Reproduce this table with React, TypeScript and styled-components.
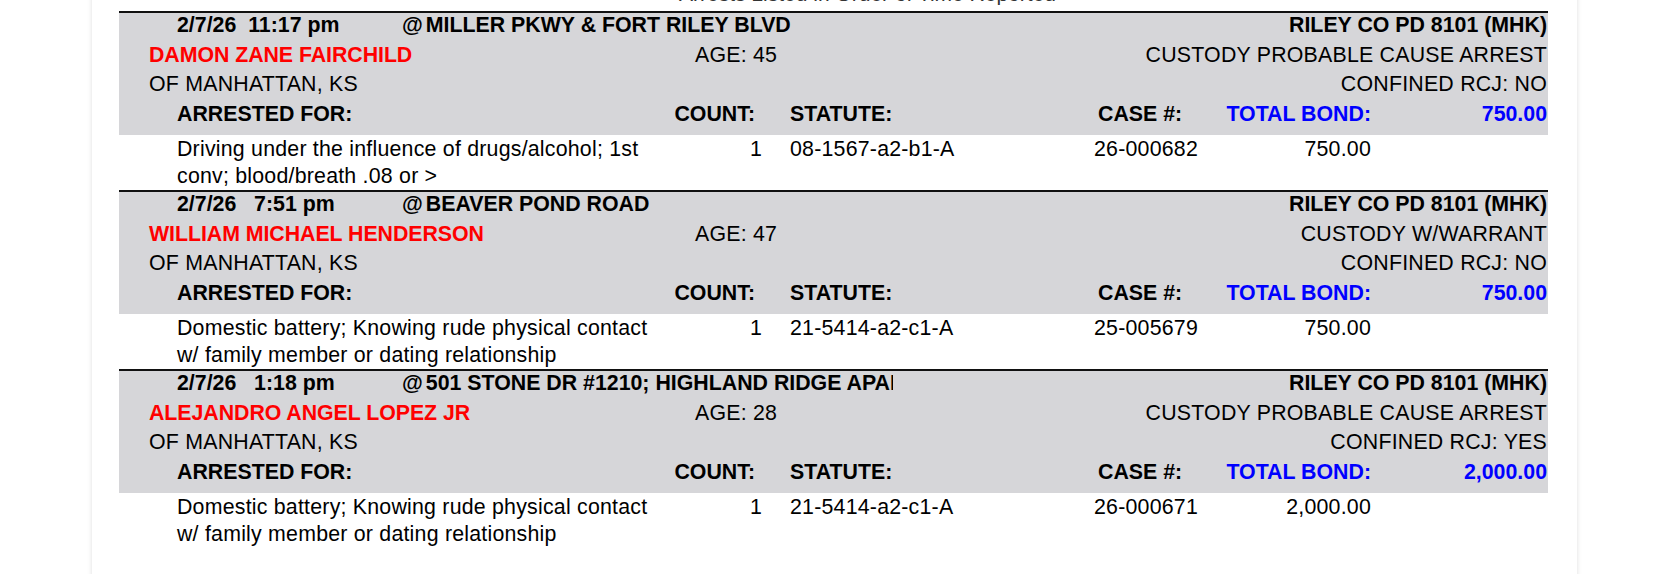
import React from 'react';
import styled, { createGlobalStyle } from 'styled-components';

interface Charge {
  offense: string;
  count: number;
  statute: string;
  caseNo: string;
  bond: string;
}

interface Arrest {
  date: string;
  time: string;
  location: string;
  agency: string;
  name: string;
  age: number;
  custody: string;
  city: string;
  confined: string;
  total: string;
  charges: Charge[];
}

const ARRESTS: Arrest[] = [
  {
    date: '2/7/26',
    time: '11:17 pm',
    location: 'MILLER PKWY & FORT RILEY BLVD',
    agency: 'RILEY CO PD 8101 (MHK)',
    name: 'DAMON ZANE FAIRCHILD',
    age: 45,
    custody: 'CUSTODY PROBABLE CAUSE ARREST',
    city: 'OF MANHATTAN, KS',
    confined: 'NO',
    total: '750.00',
    charges: [
      {
        offense: 'Driving under the influence of drugs/alcohol; 1st conv; blood/breath .08 or >',
        count: 1,
        statute: '08-1567-a2-b1-A',
        caseNo: '26-000682',
        bond: '750.00',
      },
    ],
  },
  {
    date: '2/7/26',
    time: '7:51 pm',
    location: 'BEAVER POND ROAD',
    agency: 'RILEY CO PD 8101 (MHK)',
    name: 'WILLIAM MICHAEL HENDERSON',
    age: 47,
    custody: 'CUSTODY W/WARRANT',
    city: 'OF MANHATTAN, KS',
    confined: 'NO',
    total: '750.00',
    charges: [
      {
        offense: 'Domestic battery; Knowing rude physical contact w/ family member or dating relationship',
        count: 1,
        statute: '21-5414-a2-c1-A',
        caseNo: '25-005679',
        bond: '750.00',
      },
    ],
  },
  {
    date: '2/7/26',
    time: '1:18 pm',
    location: '501 STONE DR #1210; HIGHLAND RIDGE APARTMENTS',
    agency: 'RILEY CO PD 8101 (MHK)',
    name: 'ALEJANDRO ANGEL LOPEZ JR',
    age: 28,
    custody: 'CUSTODY PROBABLE CAUSE ARREST',
    city: 'OF MANHATTAN, KS',
    confined: 'YES',
    total: '2,000.00',
    charges: [
      {
        offense: 'Domestic battery; Knowing rude physical contact w/ family member or dating relationship',
        count: 1,
        statute: '21-5414-a2-c1-A',
        caseNo: '26-000671',
        bond: '2,000.00',
      },
    ],
  },
];

const CHARGE_COLUMNS = '543px 100px 332px 126px 151px 1fr';

export default function App() {
  return (
    <>
      <GlobalStyle />
      <Sheet>
        <Title>Arrests Listed in Order of Time Reported</Title>
        <Report>
          {ARRESTS.map(item => (
            <Record key={item.name}>
              <Summary>
                <HeadRow $cols="283px 491px 1fr">
                  <When>{`${item.date}  ${item.time.padStart(8)}`}</When>
                  <Location>
                    <At>@</At>
                    {item.location}
                  </Location>
                  <Agency>{item.agency}</Agency>
                </HeadRow>
                <HeadRow $cols="576px 1fr auto">
                  <Name>{item.name}</Name>
                  <Plain>AGE: {item.age}</Plain>
                  <Plain $right>{item.custody}</Plain>
                </HeadRow>
                <HeadRow $cols="576px 1fr auto">
                  <City>{item.city}</City>
                  <span />
                  <Plain $right>CONFINED RCJ: {item.confined}</Plain>
                </HeadRow>
                <HeadRow $cols={CHARGE_COLUMNS}>
                  <Label $padLeft={58}>ARRESTED FOR:</Label>
                  <Label $right $padRight={7}>COUNT:</Label>
                  <Label $padLeft={28}>STATUTE:</Label>
                  <Label $padLeft={4}>CASE #:</Label>
                  <Label $right $blue>TOTAL BOND:</Label>
                  <Label $right $blue $padRight={1}>{item.total}</Label>
                </HeadRow>
              </Summary>
              {item.charges.map(charge => (
                <ChargeRow key={charge.caseNo}>
                  <Offense>{charge.offense}</Offense>
                  <ChargeCell $right>{charge.count}</ChargeCell>
                  <ChargeCell $padLeft={28}>{charge.statute}</ChargeCell>
                  <ChargeCell>{charge.caseNo}</ChargeCell>
                  <ChargeCell $right>{charge.bond}</ChargeCell>
                  <span />
                </ChargeRow>
              ))}
            </Record>
          ))}
        </Report>
      </Sheet>
    </>
  );
}

const GlobalStyle = createGlobalStyle`
  html, body {
    margin: 0;
    padding: 0;
    background: #ffffff;
    overflow: hidden;
  }

  body {
    font-family: 'Liberation Sans', Arial, sans-serif;
    color: #000000;
  }
`;

const Sheet = styled.div`
  width: 1485px;
  min-height: 640px;
  margin-left: 92px;
  margin-top: -19px;

  background: #ffffff;
  box-shadow: 0 0 5px rgba(0, 0, 0, 0.13);
`;

const Title = styled.h2`
  margin: 0 0 4px;
  padding-left: 66px;
  height: 26px;

  font-size: 21px;
  font-weight: 400;
  line-height: 26px;
  text-align: center;
  color: #333333;
`;

const Report = styled.div`
  padding: 0 29px 0 27px;
  font-size: 21.33px;
  letter-spacing: 0.22px;
`;

const Record = styled.section`
  border-top: 2px solid #111111;
`;

const Summary = styled.div`
  padding-bottom: 4px;
  background: #d6d6d9;
`;

const HeadRow = styled.div<{ $cols: string }>`
  display: grid;
  grid-template-columns: ${({ $cols }) => $cols};
  height: 29.5px;

  line-height: 25.5px;
  white-space: nowrap;
`;

const When = styled.span`
  padding-left: 58px;
  font-weight: 700;
  letter-spacing: 0;
  white-space: pre;
`;

const Location = styled.span`
  overflow: hidden;
  font-weight: 700;
  letter-spacing: 0;
`;

const At = styled.span`
  margin-right: 3px;
`;

const Agency = styled.span`
  padding-right: 1px;
  font-weight: 700;
  letter-spacing: 0;
  text-align: right;
`;

const Name = styled.span`
  padding-left: 30px;
  font-weight: 700;
  letter-spacing: -0.05px;
  color: #ff0000;
`;

const City = styled.span`
  padding-left: 30px;
`;

const Plain = styled.span<{ $right?: boolean }>`
  padding-right: ${({ $right }) => ($right ? '1px' : '0')};
  text-align: ${({ $right }) => ($right ? 'right' : 'left')};
`;

const Label = styled.span<{
  $right?: boolean;
  $blue?: boolean;
  $padLeft?: number;
  $padRight?: number;
}>`
  padding-left: ${({ $padLeft }) => $padLeft ?? 0}px;
  padding-right: ${({ $padRight }) => $padRight ?? 0}px;

  font-weight: 700;
  letter-spacing: 0;
  text-align: ${({ $right }) => ($right ? 'right' : 'left')};
  color: ${({ $blue }) => ($blue ? '#0000ff' : '#000000')};
`;

const ChargeRow = styled.div`
  display: grid;
  grid-template-columns: ${CHARGE_COLUMNS};
  padding: 1px 0;
  line-height: 26.6px;
`;

const Offense = styled.span`
  padding-left: 58px;
`;

const ChargeCell = styled.span<{ $right?: boolean; $padLeft?: number }>`
  padding-left: ${({ $padLeft }) => $padLeft ?? 0}px;
  text-align: ${({ $right }) => ($right ? 'right' : 'left')};
  white-space: nowrap;
`;
